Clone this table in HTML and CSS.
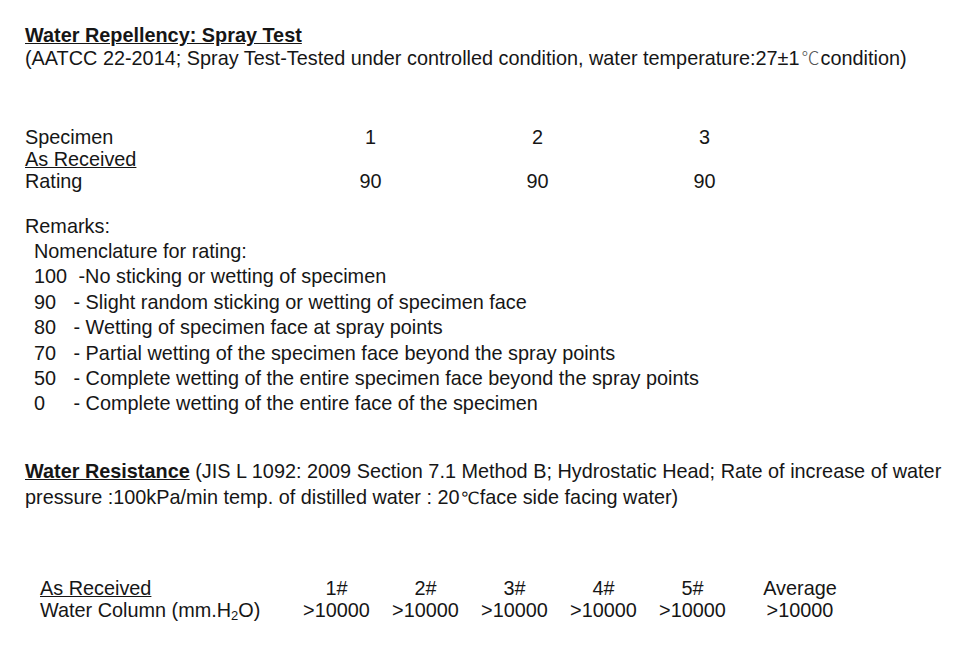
FILE: index.html
```html
<!DOCTYPE html>
<html>
<head>
<meta charset="utf-8">
<link rel="stylesheet" href="styles.css">
</head>
<body>
<div class="page">
  <section class="head">
    <div class="title">Water Repellency: Spray Test</div>
    <div>(AATCC 22-2014; Spray Test-Tested under controlled condition, water temperature:27±1<span class="deg-light">℃</span>condition)</div>
  </section>

  <section class="spec">
    <div class="lbl">Specimen</div><div class="val">1</div><div class="val">2</div><div class="val">3</div>
    <div class="lbl u">As Received</div><div></div><div></div><div></div>
    <div class="lbl">Rating</div><div class="val">90</div><div class="val">90</div><div class="val">90</div>
  </section>

  <section class="remarks">
    <div>Remarks:</div>
    <div class="ind">Nomenclature for rating:</div>
    <div class="ind row"><span class="num">100</span><span class="txt first">-No sticking or wetting of specimen</span></div>
    <div class="ind row"><span class="num">90</span><span class="txt">- Slight random sticking or wetting of specimen face</span></div>
    <div class="ind row"><span class="num">80</span><span class="txt">- Wetting of specimen face at spray points</span></div>
    <div class="ind row"><span class="num">70</span><span class="txt">- Partial wetting of the specimen face beyond the spray points</span></div>
    <div class="ind row"><span class="num">50</span><span class="txt">- Complete wetting of the entire specimen face beyond the spray points</span></div>
    <div class="ind row"><span class="num">0</span><span class="txt">- Complete wetting of the entire face of the specimen</span></div>
  </section>

  <section class="resist">
    <div><span class="bu">Water Resistance</span> <span>(JIS L 1092: 2009 Section 7.1 Method B; Hydrostatic Head; Rate of increase of water</span></div>
    <div><span>pressure :100kPa/min temp. of distilled water : 20</span><span class="deg">℃</span><span>face side facing water)</span></div>
  </section>

  <section class="wc">
    <div class="lbl u">As Received</div><div class="val">1#</div><div class="val">2#</div><div class="val">3#</div><div class="val">4#</div><div class="val">5#</div><div class="val">Average</div>
    <div class="lbl">Water Column (mm.H<sub>2</sub>O)</div><div class="val">&gt;10000</div><div class="val">&gt;10000</div><div class="val">&gt;10000</div><div class="val">&gt;10000</div><div class="val">&gt;10000</div><div class="val">&gt;10000</div>
  </section>
</div>
</body>
</html>
```
FILE: styles.css
```css
html, body {
  margin: 0;
  padding: 0;
  background: #ffffff;
}
body {
  font-family: "Liberation Sans", Arial, sans-serif;
  font-size: 19.85px;
  color: #161616;
}
.page {
  padding: 24px 0 0 25px;
  width: 930px;
}
.head {
  line-height: 22px;
}
.title {
  font-weight: bold;
  text-decoration: underline;
}
.deg-light {
  font-family: "Noto Sans CJK SC", "DejaVu Sans", sans-serif;
  font-weight: 300;
  color: #555;
  font-size: 18px;
  margin-left: 2px;
  margin-right: 1px;
}
.deg {
  font-family: "DejaVu Sans", sans-serif;
  font-size: 17px;
  margin-left: 1px;
}
.spec {
  margin-top: 57px;
  display: grid;
  grid-template-columns: 262px 167px 167px 167px;
  line-height: 22px;
}
.val {
  text-align: center;
}
.u {
  text-decoration: underline;
}
.remarks {
  margin-top: 21.5px;
  line-height: 25.4px;
}
.ind {
  padding-left: 9px;
}
.row {
  display: flex;
}
.num {
  width: 39.5px;
  flex: none;
}
.txt.first {
  padding-left: 5px;
}
.resist {
  margin-top: 41.5px;
  line-height: 26px;
  white-space: nowrap;
}
.bu {
  font-weight: bold;
  text-decoration: underline;
}
.wc {
  margin-top: 66px;
  padding-left: 15px;
  display: grid;
  grid-template-columns: 252px 89px 89px 89px 89px 89px 126px;
  line-height: 22px;
}
sub {
  font-size: 13px;
  line-height: 0;
  vertical-align: -3px;
}
```
